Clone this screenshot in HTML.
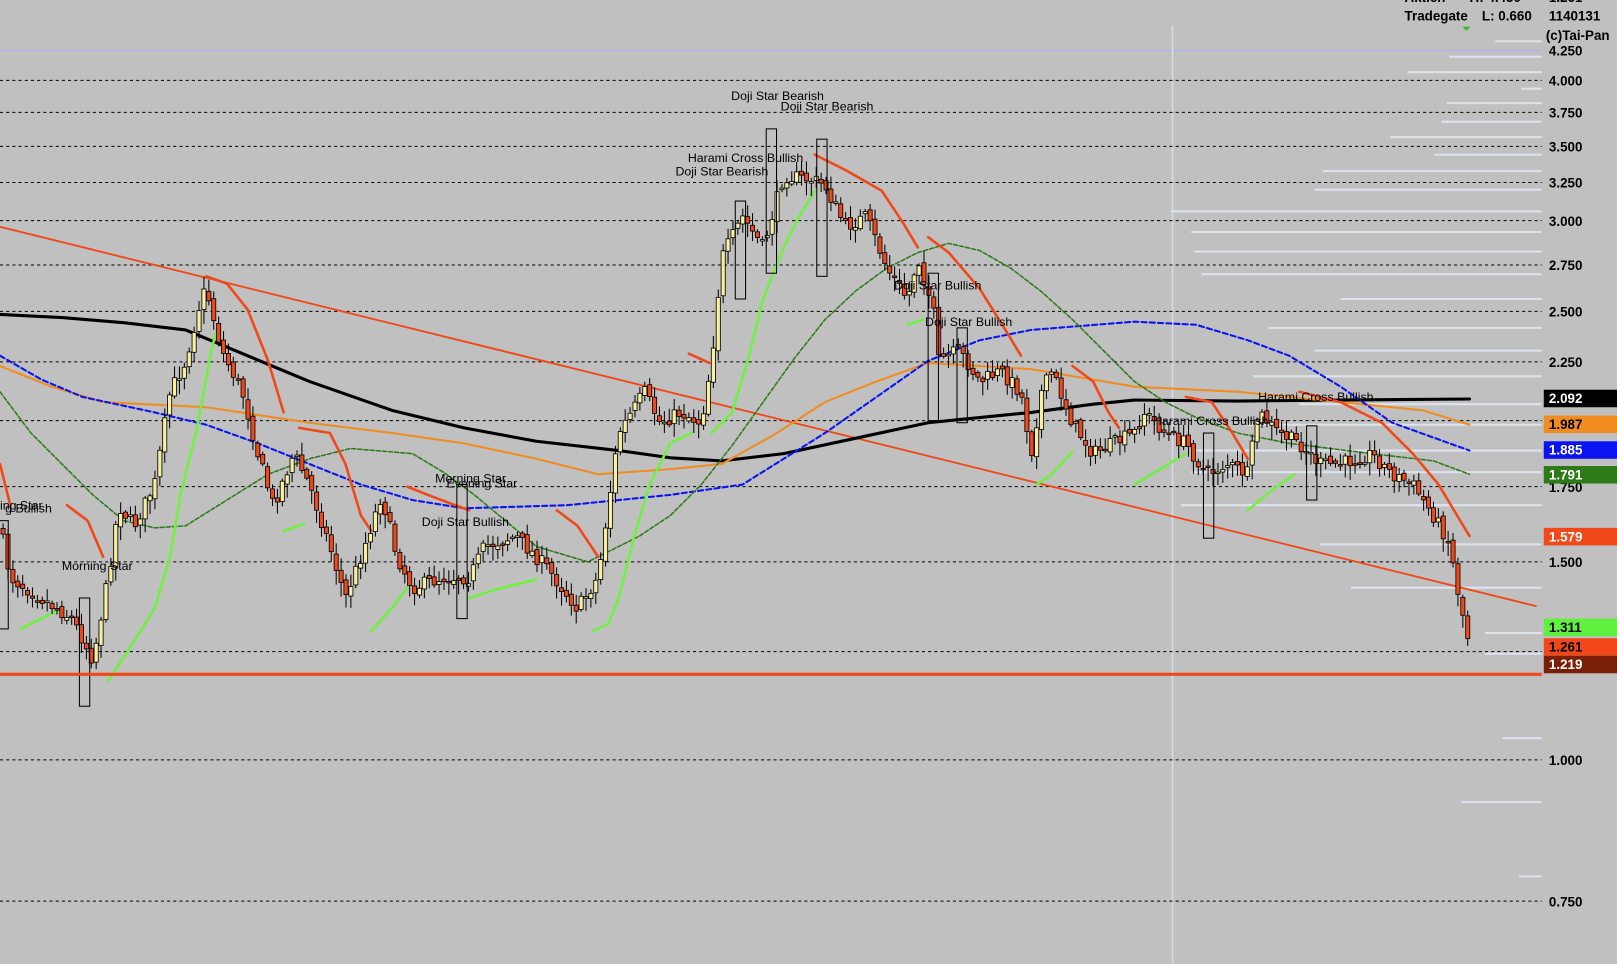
<!DOCTYPE html>
<html><head><meta charset="utf-8"><style>
html,body{margin:0;padding:0;background:#c0c0c0;overflow:hidden}
svg{display:block}
text{font-family:"Liberation Sans",sans-serif}
</style></head><body>
<svg id="s" width="1617" height="964" viewBox="0 0 1568 935" preserveAspectRatio="none" xmlns="http://www.w3.org/2000/svg">
<rect width="1568" height="935" fill="#c0c0c0"/>
<g id="light" stroke="#dde3ee" stroke-width="2"></g>
<line x1="0" y1="49" x2="1495" y2="49" stroke="#b4b4ec" stroke-width="1.5"/>
<line x1="1137" y1="25" x2="1137" y2="935" stroke="#d4dcec" stroke-width="1.5"/>
<g id="grid" stroke="#000" stroke-width="1" stroke-dasharray="3,3"></g>
<line x1="0" y1="220" x2="1490" y2="588" stroke="#f04818" stroke-width="1.8"/>
<g id="lines" fill="none"></g>
<g id="candles"></g>
<line x1="0" y1="654" x2="1495" y2="654" stroke="#f04818" stroke-width="3"/>
<g font-size="12" fill="#000">
<text x="709" y="97">Doji Star Bearish</text>
<text x="757" y="107">Doji Star Bearish</text>
<text x="667" y="157">Harami Cross Bullish</text>
<text x="655" y="170">Doji Star Bearish</text>
<text x="867" y="281">Doji Star Bullish</text>
<text x="897" y="316">Doji Star Bullish</text>
<text x="1220" y="389">Harami Cross Bullish</text>
<text x="1118" y="412">Harami Cross Bullish</text>
<text x="422" y="468">Morning Star</text>
<text x="433" y="473">Evening Star</text>
<text x="409" y="510">Doji Star Bullish</text>
<text x="60" y="553">Morning Star</text>
<text x="0" y="494">ing Star</text>
<text x="5" y="497">g Bullish</text>
</g>
<g font-size="13" font-weight="bold" fill="#000">
<text x="1362" y="2">Aktien</text><text x="1425" y="2">H: 4.450</text><text x="1502" y="2">1.261</text>
<text x="1362" y="20">Tradegate</text><text x="1437" y="20">L: 0.660</text><text x="1502" y="20">1140131</text>
<text x="1499" y="39">(c)Tai-Pan</text>
</g>
<polygon points="1418,26 1426,26 1422,30" fill="#3cb83c"/>
<g id="scale" font-size="13" font-weight="bold" fill="#000"></g>
<g id="tags" font-size="13" font-weight="bold"></g>
</svg>
<script>
(function(){
var NS="http://www.w3.org/2000/svg";
function el(p,t,a,txt){var e=document.createElementNS(NS,t);for(var k in a)e.setAttribute(k,a[k]);if(txt)e.textContent=txt;document.getElementById(p).appendChild(e);return e;}
[[49,"4.250"],[78,"4.000"],[109,"3.750"],[142,"3.500"],[177,"3.250"],[214,"3.000"],[257,"2.750"],[302,"2.500"],[351,"2.250"],[408,""],[472,"1.750"],[545,"1.500"],[632,""],[737,"1.000"],[874,"0.750"]].forEach(function(g){
 if(g[0]!=49)el("grid","line",{x1:0,y1:g[0],x2:1495,y2:g[0]});
 if(g[1])el("scale","text",{x:1502,y:g[0]+5},g[1]);
});
[[40,1450],[55,1405],[70,1365],[86,1475],[100,1403],[118,1398],[133,1348],[150,1391],[166,1283],[184,1275],[205,1135],[225,1155],[244,1158],[266,1165],[290,1300],[318,1230],[340,1275],[365,1215],[392,1260],[412,1210],[437,1160],[458,1155],[490,1145],[528,1280],[570,1310],[614,1440],[634,1440],[716,1457],[778,1417],[850,1473]].forEach(function(l){el("light","line",{x1:l[1],y1:l[0],x2:1495,y2:l[0]});});
[[378,"#000","#fff","2.092"],[403,"#f08c20","#000","1.987"],[428,"#0a14f0","#fff","1.885"],[452,"#2e7a18","#fff","1.791"],[512,"#f04818","#fff","1.579"],[600,"#60f040","#000","1.311"],[619,"#f04818","#000","1.261"],[636,"#7a1e08","#fff","1.219"]].forEach(function(t){
 el("tags","rect",{x:1497,y:t[0],width:71,height:17,fill:t[1]});
 el("tags","text",{x:1502,y:t[0]+13,fill:t[2]},t[3]);
});
function pl(pts,c,w,d){var a={points:pts,stroke:c,"stroke-width":w,"stroke-linejoin":"round","stroke-linecap":"round"};if(d)a["stroke-dasharray"]=d;el("lines","polyline",a);}
pl("0,305 60,308 120,313 180,320 240,345 300,370 380,398 450,415 520,428 600,437 650,444 700,447 760,440 830,425 900,410 1000,400 1060,392 1100,388 1200,389 1300,388 1425,387","#000",3);
pl("0,355 50,375 100,390 200,395 300,410 380,420 450,430 520,445 580,460 650,455 700,450 750,422 800,390 850,370 900,352 1000,358 1100,375 1200,380 1300,390 1380,398 1425,412","#f08c20",2);
pl("0,345 40,368 80,385 150,400 200,412 250,430 300,450 350,470 400,485 450,493 550,490 650,480 720,470 760,445 800,420 850,385 900,350 950,330 1000,320 1100,312 1160,315 1210,330 1250,345 1300,375 1350,410 1425,437","#0a14f0",2,"5,3");
pl("0,380 30,420 60,450 90,480 120,505 150,512 180,510 220,485 260,460 300,445 340,435 400,440 430,458 460,480 490,505 520,530 570,545 620,520 650,500 680,470 710,432 740,390 770,348 800,310 830,282 860,260 890,245 920,236 950,243 980,260 1010,283 1040,310 1070,340 1100,370 1130,390 1160,405 1200,420 1250,430 1330,440 1390,447 1425,460","#2e7a18",1.5,"4,2");
["0,450 10,490","65,490 85,505 100,540","200,268 220,275 240,300 260,350 275,400","290,415 320,420 335,450 350,500 360,515","395,472 420,482 455,495","540,495 560,510 580,540","668,343 688,352","790,150 820,165 855,185 875,215 890,240","900,230 920,245 950,280 975,320 990,345","1040,355 1060,370 1075,400 1085,415","1150,385 1175,390 1195,420 1210,445","1260,380 1300,390 1340,410 1370,440 1395,470 1410,495 1425,520"].forEach(function(p){pl(p,"#f04818",2.5);});
["20,610 60,590","105,660 125,630 150,590 165,540 175,480 190,420 205,340 210,320","275,515 295,508","360,612 380,590 395,570","455,580 480,572 520,562","575,612 590,605 600,580 615,520 630,470 650,430 670,420","690,420 710,400 725,350 740,290 760,240 775,210 790,185","880,315 895,310","1005,470 1020,460 1040,438","1100,470 1125,455 1150,440","1210,495 1230,478 1255,460"].forEach(function(p){pl(p,"#70f040",2.5);});
var P=[[0,510],[10,560],[40,580],[70,600],[90,640],[105,560],[115,490],[130,510],[150,470],[165,380],[180,350],[195,290],[200,280],[215,340],[235,380],[250,440],[265,490],[285,440],[300,470],[320,530],[335,580],[350,540],[370,480],[385,540],[400,570],[430,560],[455,560],[470,530],[500,520],[530,550],[560,590],[580,560],[600,420],[625,380],[640,410],[660,400],[680,410],[690,350],[700,250],[720,210],[740,240],[760,170],[790,175],[800,180],[820,220],[840,210],[860,260],[880,290],[890,250],[905,300],[910,350],[930,340],[950,370],[970,360],[990,380],[1000,440],[1010,380],[1020,360],[1040,410],[1060,440],[1080,430],[1100,420],[1110,400],[1130,420],[1150,430],[1170,460],[1190,450],[1210,460],[1220,400],[1240,420],[1260,430],[1280,450],[1300,450],[1330,440],[1350,460],[1370,470],[1390,500],[1405,525],[1415,580],[1425,625]];
function f(x){for(var i=1;i<P.length;i++){if(x<=P[i][0]){var a=P[i-1],b=P[i];return a[1]+(b[1]-a[1])*(x-a[0])/(b[0]-a[0]);}}return P[P.length-1][1];}
var seed=7;function r(){seed=(seed*16807)%2147483647;return seed/2147483647;}
var prev=f(0);
for(var x=3;x<=1424;x+=4.75){
 var cl=f(x)+(r()-0.5)*14, op=prev+(r()-0.5)*6;
 var bt=Math.min(op,cl),bb=Math.max(op,cl);if(bb-bt<1.5)bb=bt+1.5;
 var hi=bt-r()*10-2,lo=bb+r()*12+2;
 el("candles","line",{x1:x,y1:hi,x2:x,y2:lo,stroke:"#000","stroke-width":1});
 el("candles","rect",{x:x-2,y:bt,width:4,height:bb-bt,fill:cl<op?"#f8f0a0":"#f04818",stroke:"#000","stroke-width":0.8});
 prev=cl;
}
[[3,505,610],[82,580,685],[448,470,600],[718,195,290],[748,125,265],[797,135,268],[905,265,408],[933,318,410],[1172,420,522],[1272,413,485]].forEach(function(b){el("candles","rect",{x:b[0]-5,y:b[1],width:10,height:b[2]-b[1],fill:"none",stroke:"#000","stroke-width":1});});
})();
</script>
</body></html>
